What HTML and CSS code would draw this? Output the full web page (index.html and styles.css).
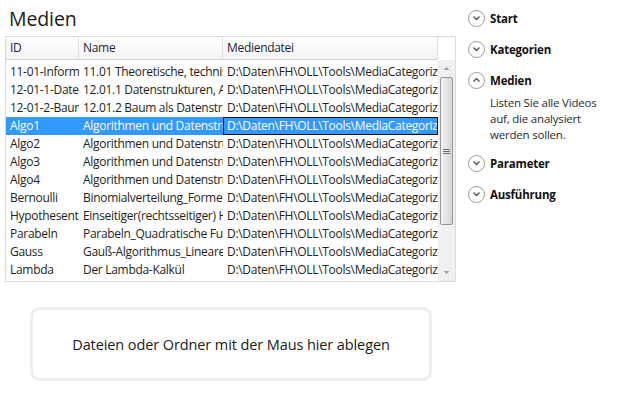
FILE: index.html
```html
<!DOCTYPE html>
<html>
<head>
<meta charset="utf-8">
<link rel="stylesheet" href="styles.css">
</head>
<body>
<div class="page">
  <div class="main">
    <h1 class="title">Medien</h1>
    <div class="grid">
      <div class="cols">
        <div class="head">
          <div class="hc c1">ID</div>
          <div class="hc c2">Name</div>
          <div class="hc c3">Mediendatei</div>
        </div>
        <div class="rows">
          <div class="row"><div class="c c1">11-01-Informatik</div><div class="c c2">11.01 Theoretische, technische Informatik</div><div class="c c3">D:\Daten\FH\OLL\Tools\MediaCategorizer</div></div>
          <div class="row"><div class="c c1">12-01-1-Datenstrukturen</div><div class="c c2">12.01.1 Datenstrukturen, Arrays</div><div class="c c3">D:\Daten\FH\OLL\Tools\MediaCategorizer</div></div>
          <div class="row"><div class="c c1">12-01-2-Baum</div><div class="c c2">12.01.2 Baum als Datenstruktur</div><div class="c c3">D:\Daten\FH\OLL\Tools\MediaCategorizer</div></div>
          <div class="row sel"><div class="c c1">Algo1</div><div class="c c2">Algorithmen und Datenstrukturen</div><div class="c c3 focus">D:\Daten\FH\OLL\Tools\MediaCategorizer</div></div>
          <div class="row"><div class="c c1">Algo2</div><div class="c c2">Algorithmen und Datenstrukturen</div><div class="c c3">D:\Daten\FH\OLL\Tools\MediaCategorizer</div></div>
          <div class="row"><div class="c c1">Algo3</div><div class="c c2">Algorithmen und Datenstrukturen</div><div class="c c3">D:\Daten\FH\OLL\Tools\MediaCategorizer</div></div>
          <div class="row"><div class="c c1">Algo4</div><div class="c c2">Algorithmen und Datenstrukturen</div><div class="c c3">D:\Daten\FH\OLL\Tools\MediaCategorizer</div></div>
          <div class="row"><div class="c c1">Bernoulli</div><div class="c c2">Binomialverteilung_Formeln</div><div class="c c3">D:\Daten\FH\OLL\Tools\MediaCategorizer</div></div>
          <div class="row"><div class="c c1">Hypothesentest</div><div class="c c2">Einseitiger(rechtsseitiger) Hypothesentest</div><div class="c c3">D:\Daten\FH\OLL\Tools\MediaCategorizer</div></div>
          <div class="row"><div class="c c1">Parabeln</div><div class="c c2">Parabeln_Quadratische Funktionen</div><div class="c c3">D:\Daten\FH\OLL\Tools\MediaCategorizer</div></div>
          <div class="row"><div class="c c1">Gauss</div><div class="c c2">Gauß-Algorithmus_Lineare Gleichungen</div><div class="c c3">D:\Daten\FH\OLL\Tools\MediaCategorizer</div></div>
          <div class="row"><div class="c c1">Lambda</div><div class="c c2">Der Lambda-Kalkül</div><div class="c c3">D:\Daten\FH\OLL\Tools\MediaCategorizer</div></div>
        </div>
      </div>
      <div class="vscroll">
        <div class="corner"></div>
        <div class="track">
          <svg class="arrow" width="17" height="17" viewBox="0 0 17 17"><path d="M5.5 10 L8.5 7 L11.5 10 Z" fill="#a0a0a0"/></svg>
          <div class="thumb">
            <svg width="9" height="7" viewBox="0 0 9 7"><path d="M1 1.5H8M1 3.5H8M1 5.5H8" stroke="#707070" stroke-width="1"/></svg>
          </div>
          <div class="spacer"></div>
          <svg class="arrow" width="17" height="17" viewBox="0 0 17 17"><path d="M5.5 7 L8.5 10 L11.5 7 Z" fill="#a0a0a0"/></svg>
        </div>
      </div>
    </div>
    <div class="drop">Dateien oder Ordner mit der Maus hier ablegen</div>
  </div>
  <div class="side">
    <div class="step">
      <span class="circ"><svg width="9" height="6" viewBox="0 0 9 6"><path d="M1.5 1.5 L4.5 4.5 L7.5 1.5" fill="none" stroke="#555" stroke-width="1.4"/></svg></span>
      <span class="lbl">Start</span>
    </div>
    <div class="step">
      <span class="circ"><svg width="9" height="6" viewBox="0 0 9 6"><path d="M1.5 1.5 L4.5 4.5 L7.5 1.5" fill="none" stroke="#555" stroke-width="1.4"/></svg></span>
      <span class="lbl">Kategorien</span>
    </div>
    <div class="step open">
      <span class="circ"><svg width="9" height="6" viewBox="0 0 9 6"><path d="M1.5 4.5 L4.5 1.5 L7.5 4.5" fill="none" stroke="#555" stroke-width="1.4"/></svg></span>
      <span class="lbl">Medien</span>
    </div>
    <div class="desc">Listen Sie alle Videos auf, die analysiert werden sollen.</div>
    <div class="step">
      <span class="circ"><svg width="9" height="6" viewBox="0 0 9 6"><path d="M1.5 1.5 L4.5 4.5 L7.5 1.5" fill="none" stroke="#555" stroke-width="1.4"/></svg></span>
      <span class="lbl">Parameter</span>
    </div>
    <div class="step">
      <span class="circ"><svg width="9" height="6" viewBox="0 0 9 6"><path d="M1.5 1.5 L4.5 4.5 L7.5 1.5" fill="none" stroke="#555" stroke-width="1.4"/></svg></span>
      <span class="lbl">Ausführung</span>
    </div>
  </div>
</div>
</body>
</html>
```

FILE: styles.css
```css
html, body {
  margin: 0;
  padding: 0;
  background: #ffffff;
}
body {
  font-family: "Open Sans", "Noto Sans", "Liberation Sans", sans-serif;
  color: #1e1e1e;
  width: 618px;
  height: 404px;
  overflow: hidden;
}
.page {
  display: flex;
}
.main {
  width: 460px;
  padding: 5px 0 0 5px;
  box-sizing: border-box;
}
.title {
  margin: 0 0 3px 4px;
  font-size: 19.5px;
  font-weight: 400;
  line-height: 28px;
  color: #1a1a1a;
  letter-spacing: -0.1px;
}
.grid {
  width: 451px;
  height: 246px;
  border: 1px solid #dcdcdc;
  box-sizing: border-box;
  display: flex;
  font-size: 12px;
  letter-spacing: -0.3px;
}
.cols {
  width: 432px;
  display: flex;
  flex-direction: column;
}
.head {
  display: flex;
  height: 22px;
  background: linear-gradient(#ffffff, #f3f3f3);
  border-bottom: 1px solid #d5d5d5;
}
.hc {
  line-height: 22px;
  padding-left: 4px;
  box-sizing: border-box;
  color: #1c1c3a;
  border-right: 1px solid #dedede;
  white-space: nowrap;
  overflow: hidden;
}
.c1 { width: 73px; flex: none; }
.c2 { width: 144px; flex: none; }
.c3 { width: 215px; flex: none; }
.rows {
  padding-top: 3px;
}
.row {
  display: flex;
  height: 18px;
}
.c {
  line-height: 18px;
  padding-left: 4px;
  box-sizing: border-box;
  white-space: nowrap;
  overflow: hidden;
}
.row.sel {
  background: #3399ff;
  color: #ffffff;
}
.focus {
  border: 1px solid #111111;
  line-height: 16px;
  padding-left: 3px;
}
.vscroll {
  width: 17px;
  display: flex;
  flex-direction: column;
}
.corner {
  height: 23px;
  background: #ffffff;
}
.track {
  flex: 1;
  background: #f0f0f0;
  display: flex;
  flex-direction: column;
  align-items: center;
}
.arrow {
  flex: none;
  display: block;
}
.thumb {
  width: 13px;
  height: 148px;
  box-sizing: border-box;
  border: 1px solid #979797;
  border-radius: 2px;
  background: linear-gradient(90deg, #f2f2f2, #e4e4e4 50%, #d4d4d4);
  display: flex;
  align-items: center;
  justify-content: center;
}
.thumb svg { display: block; }
.spacer { flex: 1; }
.drop {
  margin: 25px 0 0 25px;
  width: 402px;
  height: 74px;
  box-sizing: border-box;
  border: 3px solid #eeeeee;
  border-radius: 9px;
  display: flex;
  align-items: center;
  justify-content: center;
  font-size: 14.5px;
  color: #1a1a1a;
  letter-spacing: -0.1px;
}
.side {
  width: 158px;
  padding: 9px 0 0 8px;
  box-sizing: border-box;
}
.step {
  display: flex;
  align-items: center;
  height: 18px;
  margin-bottom: 13px;
}
.step.open {
  margin-bottom: 6px;
}
.circ {
  width: 17px;
  height: 17px;
  box-sizing: border-box;
  border: 1px solid #9a9a9a;
  border-radius: 50%;
  display: flex;
  align-items: center;
  justify-content: center;
  flex: none;
}
.circ svg { display: block; }
.lbl {
  margin-left: 5px;
  font-size: 11.5px;
  font-weight: 700;
  color: #111111;
  letter-spacing: -0.2px;
}
.desc {
  margin: 0 0 11px 22px;
  font-size: 11.5px;
  line-height: 16px;
  color: #2a2a3a;
  width: 125px;
  letter-spacing: -0.2px;
}
```
